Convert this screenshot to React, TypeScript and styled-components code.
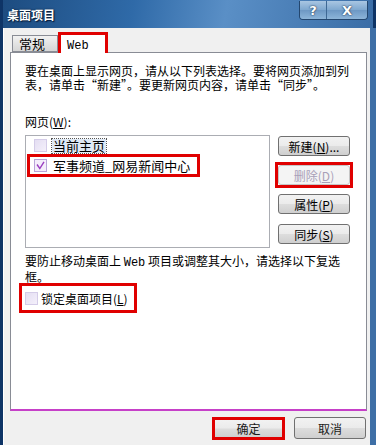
import React, { useState } from 'react';
import styled, { createGlobalStyle } from 'styled-components';

const GlobalStyle = createGlobalStyle`
  html, body {
    margin: 0;
    padding: 0;
    background: #ffffff;
  }
  * {
    box-sizing: border-box;
  }
`;

const cjk = `"SimSun", "Noto Sans CJK SC", "Liberation Sans", sans-serif`;

interface iItem {
  label: string;
  checked: boolean;
  focused?: boolean;
  marked?: boolean;
}

const items: iItem[] = [
  { label: '当前主页', checked: false, focused: true },
  { label: '军事频道_网易新闻中心', checked: true, marked: true },
];

function App() {
  const [tab, setTab] = useState<number>(1);

  return (
    <>
      <GlobalStyle />
      <Window>
        <TitleBar>
          <Title>桌面项目</Title>
          <CaptionButtons>
            <CaptionButton>?</CaptionButton>
            <CaptionButton wide>X</CaptionButton>
          </CaptionButtons>
        </TitleBar>
        <Client>
          <Tabs>
            <Tab active={tab === 0} onClick={() => setTab(0)}>
              常规
            </Tab>
            <Tab active={tab === 1} marked onClick={() => setTab(1)}>
              <Latin>Web</Latin>
            </Tab>
          </Tabs>
          <Panel>
            <Para>
              要在桌面上显示网页，请从以下列表选择。要将网页添加到列
              <br />
              表，请单击“新建”。要更新网页内容，请单击“同步”。
            </Para>
            <Label>
              网页(<u>W</u>):
            </Label>
            <ListRow>
              <ListBox>
                {items.map((item) => (
                  <ListItem key={item.label} marked={item.marked}>
                    <CheckBox checked={item.checked}>
                      {item.checked && (
                        <svg width="9" height="9" viewBox="0 0 9 9">
                          <path
                            d="M1 3.5 L3.8 7.5 L8 0.8"
                            fill="none"
                            stroke="#9b3fc0"
                            strokeWidth="1.4"
                          />
                        </svg>
                      )}
                    </CheckBox>
                    <ItemText focused={item.focused}>{item.label}</ItemText>
                  </ListItem>
                ))}
              </ListBox>
              <SideButtons>
                <SideButton>
                  新建(<u>N</u>)...
                </SideButton>
                <Marked>
                  <SideButton disabled>
                    删除(<u>D</u>)
                  </SideButton>
                </Marked>
                <SideButton>
                  属性(<u>P</u>)
                </SideButton>
                <SideButton spaced>
                  同步(<u>S</u>)
                </SideButton>
              </SideButtons>
            </ListRow>
            <Para tight>
              要防止移动桌面上 <Latin>Web</Latin> 项目或调整其大小，请选择以下复选
              <br />
              框。
            </Para>
            <LockRow>
              <CheckBox checked={false} />
              <span>
                锁定桌面项目(<u>L</u>)
              </span>
            </LockRow>
          </Panel>
          <Footer>
            <FooterButton marked>确定</FooterButton>
            <FooterButton>取消</FooterButton>
          </Footer>
        </Client>
      </Window>
    </>
  );
}

const Window = styled.div`
  width: 376px;
  height: 445px;
  display: flex;
  flex-direction: column;
  background: linear-gradient(90deg, #0e3466 0px, #0e3466 3px, #4d7fb5 3px, #4d7fb5 7px, #3e6fa6 7px);
  overflow: hidden;
  font-family: ${cjk};
  font-size: 12px;
  color: #000;
`;

const TitleBar = styled.div`
  height: 28px;
  display: flex;
  align-items: flex-start;
  justify-content: space-between;
  padding: 0 5px 0 4px;
  background: linear-gradient(100deg, #1d4c80 0%, #2f6aa8 35%, #5a8fc6 60%, #3a6da6 100%);
  border-left: 3px solid #0e3466;
  border-right: 3px solid #0e3466;
`;

const Title = styled.div`
  margin-top: 6px;
  color: #ffffff;
  font-size: 12px;
  font-weight: bold;
  text-shadow: 0 0 2px #0a1f3c, 1px 1px 1px #0a1f3c;
`;

const CaptionButtons = styled.div`
  display: flex;
  margin-top: 1px;
  border: 1px solid #24476f;
  border-top: none;
  border-radius: 0 0 4px 4px;
  overflow: hidden;
`;

const CaptionButton = styled.div<{ wide?: boolean }>`
  width: ${(p) => (p.wide ? '41px' : '26px')};
  height: 18px;
  display: flex;
  align-items: center;
  justify-content: center;
  color: #ffffff;
  font-family: "DejaVu Sans", sans-serif;
  font-weight: bold;
  font-size: 13px;
  text-shadow: 0 0 2px #223a58, 0 0 1px #223a58;
  background: linear-gradient(180deg, #a9c6e2 0%, #7ea7cf 50%, #6d98c4 51%, #8db5d9 100%);
  border-left: ${(p) => (p.wide ? '1px solid #3e6894' : 'none')};
`;

const Client = styled.div`
  flex: 1;
  display: flex;
  flex-direction: column;
  margin: 0 6px 0 3px;
  padding: 3px 3px 0 6px;
  background: #f0f0f0;
  border-left: 1px solid #ffffff;
`;

const Tabs = styled.div`
  display: flex;
  align-items: flex-end;
  height: 21px;
  padding-left: 2px;
  position: relative;
  z-index: 1;
`;

const Tab = styled.div<{ active?: boolean; marked?: boolean }>`
  height: ${(p) => (p.active ? '21px' : '17px')};
  width: ${(p) => (p.active ? '50px' : '46px')};
  margin-bottom: ${(p) => (p.active ? '-1px' : '0')};
  padding: ${(p) => (p.active ? '2px 0 0 6px' : '1px 0 0 6px')};
  font-size: 13px;
  line-height: 14px;
  background: ${(p) =>
    p.active ? '#ffffff' : 'linear-gradient(180deg, #f2f2f2 0%, #e3e3e3 50%, #d6d6d6 100%)'};
  border: ${(p) => (p.marked ? '3px solid #e00000' : '1px solid #898c95')};
  border-bottom: ${(p) => (p.active ? 'none' : '1px solid #898c95')};
  cursor: default;
`;

const Latin = styled.span`
  font-family: "Liberation Mono", monospace;
  font-size: 12px;
`;

const Panel = styled.div`
  height: 359px;
  background: #ffffff;
  border: 1px solid #898c95;
  border-bottom: 2px solid #c640c8;
  padding: 11px 14px 0 14px;
  display: flex;
  flex-direction: column;
`;

const Para = styled.div<{ tight?: boolean }>`
  line-height: 14px;
  font-size: 12px;
  margin-top: ${(p) => (p.tight ? '6px' : '0')};
  white-space: nowrap;
`;

const Label = styled.div`
  margin-top: 23px;
  font-size: 12px;
  line-height: 14px;
`;

const ListRow = styled.div`
  display: flex;
  gap: 8px;
  margin-top: 6px;
`;

const ListBox = styled.div`
  width: 245px;
  height: 113px;
  border: 1px solid #abadb3;
  background: #ffffff;
  padding: 2px 0 0 1px;
  display: flex;
  flex-direction: column;
  gap: 1px;
`;

const ListItem = styled.div<{ marked?: boolean }>`
  display: flex;
  align-items: center;
  gap: 5px;
  align-self: flex-start;
  height: ${(p) => (p.marked ? '23px' : '15px')};
  padding: ${(p) => (p.marked ? '0 6px 0 4px' : '0 0 0 7px')};
  border: ${(p) => (p.marked ? '3px solid #e00000' : 'none')};
  font-size: 13px;
`;

const CheckBox = styled.div<{ checked: boolean }>`
  width: 13px;
  height: 13px;
  flex-shrink: 0;
  display: flex;
  align-items: center;
  justify-content: center;
  border: 1px solid ${(p) => (p.checked ? '#b9a4d8' : '#d4cce8')};
  background: ${(p) => (p.checked ? '#f4eefb' : 'linear-gradient(135deg, #e4def2, #f4f0fb)')};
`;

const ItemText = styled.span<{ focused?: boolean }>`
  padding: 0 1px;
  line-height: 14px;
  background: ${(p) => (p.focused ? '#dfe9f5' : 'transparent')};
  outline: ${(p) => (p.focused ? '1px dotted #555' : 'none')};
`;

const SideButtons = styled.div`
  display: flex;
  flex-direction: column;
  gap: 9px;
  margin-top: 1px;
`;

const Marked = styled.div`
  border: 3px solid #e00000;
  margin: -3px -3px;
`;

const SideButton = styled.button<{ spaced?: boolean }>`
  width: 72px;
  height: 20px;
  margin-top: ${(p) => (p.spaced ? '1px' : '0')};
  font-family: ${cjk};
  font-size: 12px;
  color: #000;
  border: 1px solid #707070;
  border-radius: 3px;
  background: linear-gradient(180deg, #f2f2f2 0%, #ebebeb 48%, #dddddd 52%, #cfcfcf 100%);
  padding: 0;
  display: flex;
  align-items: center;
  justify-content: center;
  &:disabled {
    color: #a8a0b8;
    border-color: #c6c6c6;
    background: #f4f4f4;
  }
`;

const LockRow = styled.div`
  align-self: flex-start;
  display: flex;
  align-items: center;
  gap: 3px;
  margin-top: -1px;
  margin-left: -6px;
  height: 30px;
  padding: 0 6px 0 3px;
  border: 3px solid #e00000;
  font-size: 12px;
`;

const Footer = styled.div`
  display: flex;
  justify-content: flex-end;
  gap: 9px;
  padding: 6px 1px 0 0;
`;

const FooterButton = styled.button<{ marked?: boolean }>`
  width: ${(p) => (p.marked ? '73px' : '72px')};
  height: ${(p) => (p.marked ? '23px' : '22px')};
  font-family: ${cjk};
  font-size: 12px;
  color: #1a1a1a;
  padding: 0;
  border: ${(p) => (p.marked ? '3px solid #e00000' : '1px solid #707070')};
  border-radius: ${(p) => (p.marked ? '0' : '3px')};
  background: linear-gradient(180deg, #f2f2f2 0%, #ebebeb 48%, #dddddd 52%, #cfcfcf 100%);
`;

export default App;
